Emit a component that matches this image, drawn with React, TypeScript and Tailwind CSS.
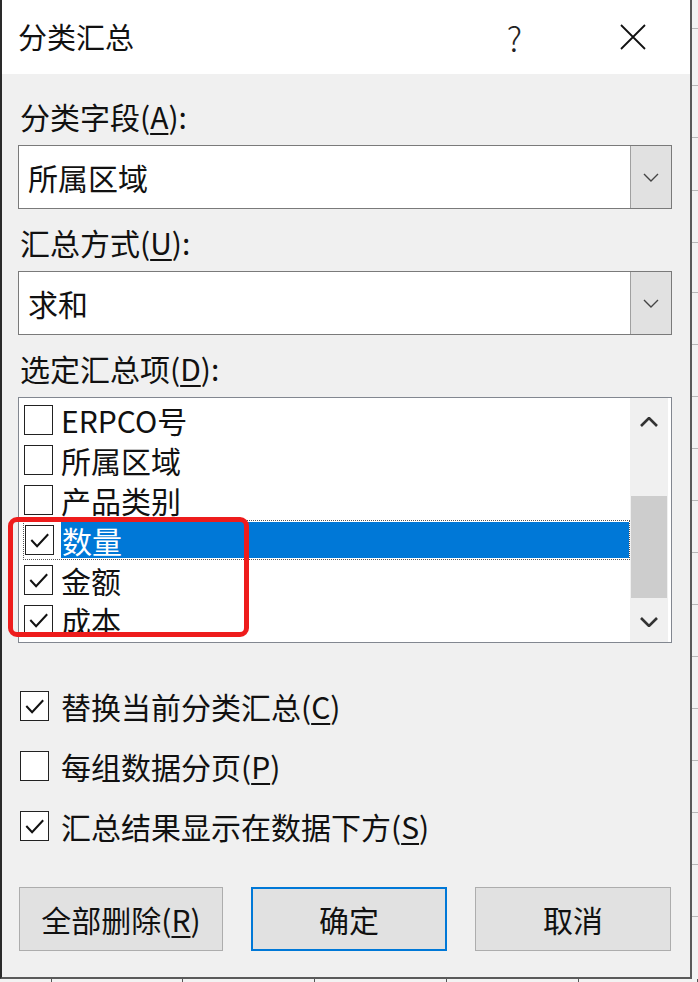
import type { ReactNode } from 'react';

const FONT = "font-['Noto_Sans_CJK_SC','Noto_Sans',sans-serif]";

function Check() {
  return (
    <svg viewBox="0 0 28 28" className="w-full h-full">
      <path d="M5.5 14 L11.5 20.5 L23 8" fill="none" stroke="#111" strokeWidth="2.1" />
    </svg>
  );
}

function Box({ checked }: { checked?: boolean }) {
  return (
    <div className="w-[29px] h-[30px] shrink-0 border-[1.5px] border-[#222] bg-white flex items-center justify-center">
      {checked && <Check />}
    </div>
  );
}

function Key({ k }: { k: string }) {
  return <span className="underline underline-offset-[4px] decoration-[1.5px]">{k}</span>;
}

function Chevron({ up }: { up?: boolean }) {
  return (
    <svg width="18" height="10" viewBox="0 0 18 10">
      <path d={up ? 'M1 9 L9 1 L17 9' : 'M1 1 L9 9 L17 1'} fill="none" stroke="#333" strokeWidth="2.6" />
    </svg>
  );
}

function Combo({ value }: { value: string }) {
  return (
    <div className="h-[64px] border border-[#7a7a7a] bg-white flex">
      <div className="flex-1 flex items-center pl-[9px] text-[30px]">{value}</div>
      <div className="w-[41px] bg-[#e1e1e1] border-l border-[#a0a0a0] flex items-center justify-center">
        <svg width="16" height="9" viewBox="0 0 16 9">
          <path d="M1 1 L8 8 L15 1" fill="none" stroke="#444" strokeWidth="1.4" />
        </svg>
      </div>
    </div>
  );
}

function Label({ children }: { children: ReactNode }) {
  return <div className="h-[36px] leading-[36px] text-[30px] pl-[2px]">{children}</div>;
}

function Option({ checked, label }: { checked?: boolean; label: ReactNode }) {
  return (
    <div className="h-[40px] flex items-center gap-[12px]">
      <Box checked={checked} />
      <span className="text-[30px] leading-[40px]">{label}</span>
    </div>
  );
}

function Btn({ w, primary, children }: { w: string; primary?: boolean; children: ReactNode }) {
  return (
    <div
      className={`${w} h-[64px] bg-[#e1e1e1] flex items-center justify-center text-[30px] ${
        primary ? 'border-2 border-[#0078d7]' : 'border border-[#adadad]'
      }`}
    >
      {children}
    </div>
  );
}

const ITEMS = [
  { label: 'ERPCO号', checked: false },
  { label: '所属区域', checked: false },
  { label: '产品类别', checked: false },
  { label: '数量', checked: true, selected: true },
  { label: '金额', checked: true },
  { label: '成本', checked: true },
];

export default function App() {
  return (
    <div className={`w-[698px] h-[982px] bg-[#ebebeb] flex flex-col overflow-hidden text-[#111] ${FONT}`}>
      <div className="flex h-[979px]">
        {/* Dialog */}
        <div className="w-[692px] h-full flex flex-col border-l-2 border-r-2 border-b-2 border-l-[#2a2a2a] border-r-[#5a5a5a] border-b-[#5a5a5a]">
          {/* Title bar */}
          <div className="h-[74px] bg-white flex items-center pl-[16px] pr-[44px]">
            <span className="text-[29px] flex-1">分类汇总</span>
            <span className="text-[34px] font-light mr-[98px] text-[#222]">?</span>
            <svg width="26" height="26" viewBox="0 0 26 26">
              <path d="M1 1 L25 25 M25 1 L1 25" stroke="#111" strokeWidth="1.8" />
            </svg>
          </div>

          {/* Body */}
          <div className="flex-1 bg-[#f0f0f0] pl-[16px] pr-[18px] flex flex-col relative">
            <div className="mt-[24px]">
              <Label>
                分类字段(<Key k="A" />):
              </Label>
            </div>
            <div className="mt-[11px]">
              <Combo value="所属区域" />
            </div>
            <div className="mt-[15px]">
              <Label>
                汇总方式(<Key k="U" />):
              </Label>
            </div>
            <div className="mt-[11px]">
              <Combo value="求和" />
            </div>
            <div className="mt-[15px]">
              <Label>
                选定汇总项(<Key k="D" />):
              </Label>
            </div>

            {/* List box */}
            <div className="mt-[11px] h-[246px] border border-[#828790] bg-white flex overflow-hidden">
              <div className="flex-1 pt-[2px] pl-[4px] overflow-hidden">
                {ITEMS.map((it) =>
                  it.selected ? (
                    <div key={it.label} className="h-[40px] flex items-center border border-dotted border-[#555]">
                      <div className="ml-[1px]">
                        <Box checked />
                      </div>
                      <div className="ml-[7px] flex-1 h-[36px] bg-[#0078d7] text-white text-[30px] leading-[36px] pl-[1px]">
                        {it.label}
                      </div>
                    </div>
                  ) : (
                    <div key={it.label} className="h-[40px] flex items-center px-[1px]">
                      <Box checked={it.checked} />
                      <span className="ml-[8px] text-[30px] leading-[40px]">{it.label}</span>
                    </div>
                  )
                )}
              </div>
              {/* Scrollbar */}
              <div className="w-[38px] mr-[3px] bg-[#f0f0f0] flex flex-col items-center">
                <div className="h-[48px] flex items-center justify-center">
                  <Chevron up />
                </div>
                <div className="h-[50px]" />
                <div className="w-[36px] h-[102px] bg-[#cdcdcd]" />
                <div className="flex-1 flex items-center justify-center pt-[4px]">
                  <Chevron />
                </div>
              </div>
            </div>

            {/* Red annotation */}
            <div className="absolute left-[6px] top-[443px] w-[241px] h-[120px] border-[5px] border-[#ee1c1c] rounded-[9px]" />

            <div className="mt-[43px] flex flex-col gap-[20px] pl-[2px]">
              <Option
                checked
                label={
                  <>
                    替换当前分类汇总(<Key k="C" />)
                  </>
                }
              />
              <Option
                label={
                  <>
                    每组数据分页(<Key k="P" />)
                  </>
                }
              />
              <Option
                checked
                label={
                  <>
                    汇总结果显示在数据下方(<Key k="S" />)
                  </>
                }
              />
            </div>

            <div className="mt-[41px] flex gap-[28px] pl-[1px]">
              <Btn w="w-[204px]">
                全部删除(<Key k="R" />)
              </Btn>
              <Btn w="w-[196px]" primary>
                确定
              </Btn>
              <Btn w="w-[196px]">取消</Btn>
            </div>
          </div>
        </div>

        {/* Sheet behind, right edge */}
        <div className="flex-1 bg-[#f3f3f3] flex flex-col">
          {[29, 57, 52, 53, 52, 50, 52, 52, 52, 52, 52, 52, 52, 52, 52, 52, 52, 52].map((h, i) => (
            <div key={i} className="border-b border-[#b8b8b8]" style={{ height: h }} />
          ))}
        </div>
      </div>

      {/* Sheet behind, bottom edge */}
      <div className="flex-1 bg-[#f3f3f3] flex">
        {[52, 131, 132, 132, 132, 119].map((w, i) => (
          <div key={i} className="border-r border-[#555]" style={{ width: w }} />
        ))}
      </div>
    </div>
  );
}
